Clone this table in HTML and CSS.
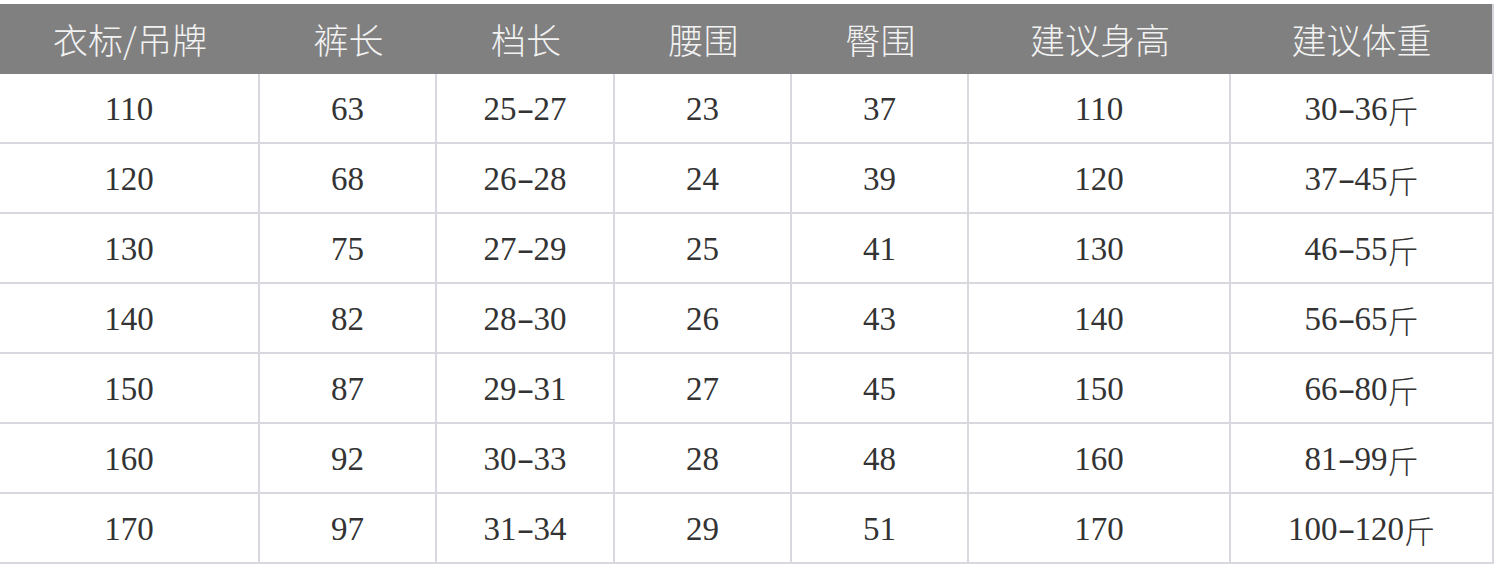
FILE: index.html
```html
<!DOCTYPE html>
<html lang="zh">
<head>
<meta charset="utf-8">
<title>尺码表</title>
<link rel="stylesheet" href="styles.css">
</head>
<body>
<div class="sheet">
  <div class="grid">
    <div class="hd">衣标/吊牌</div>
    <div class="hd">裤长</div>
    <div class="hd">档长</div>
    <div class="hd">腰围</div>
    <div class="hd">臀围</div>
    <div class="hd">建议身高</div>
    <div class="hd">建议体重</div>

    <div class="c">110</div><div class="c">63</div><div class="c">25<span class="d">-</span>27</div><div class="c">23</div><div class="c">37</div><div class="c">110</div><div class="c">30<span class="d">-</span>36<span class="cjk">斤</span></div>
    <div class="c">120</div><div class="c">68</div><div class="c">26<span class="d">-</span>28</div><div class="c">24</div><div class="c">39</div><div class="c">120</div><div class="c">37<span class="d">-</span>45<span class="cjk">斤</span></div>
    <div class="c">130</div><div class="c">75</div><div class="c">27<span class="d">-</span>29</div><div class="c">25</div><div class="c">41</div><div class="c">130</div><div class="c">46<span class="d">-</span>55<span class="cjk">斤</span></div>
    <div class="c">140</div><div class="c">82</div><div class="c">28<span class="d">-</span>30</div><div class="c">26</div><div class="c">43</div><div class="c">140</div><div class="c">56<span class="d">-</span>65<span class="cjk">斤</span></div>
    <div class="c">150</div><div class="c">87</div><div class="c">29<span class="d">-</span>31</div><div class="c">27</div><div class="c">45</div><div class="c">150</div><div class="c">66<span class="d">-</span>80<span class="cjk">斤</span></div>
    <div class="c">160</div><div class="c">92</div><div class="c">30<span class="d">-</span>33</div><div class="c">28</div><div class="c">48</div><div class="c">160</div><div class="c">81<span class="d">-</span>99<span class="cjk">斤</span></div>
    <div class="c">170</div><div class="c">97</div><div class="c">31<span class="d">-</span>34</div><div class="c">29</div><div class="c">51</div><div class="c">170</div><div class="c">100<span class="d">-</span>120<span class="cjk">斤</span></div>
  </div>
</div>
</body>
</html>
```

FILE: styles.css
```css
html, body {
  margin: 0;
  padding: 0;
  background: #ffffff;
}

.sheet {
  padding-top: 4px;
  width: 1500px;
  height: 578px;
  overflow: hidden;
}

.grid {
  display: grid;
  grid-template-columns: 260px 177px 178px 177px 177px 262px 263px;
  grid-auto-rows: 70px;
  width: 1494px;
}

.hd {
  background: #808080;
  color: #f2f2f2;
  font-family: "Noto Sans CJK SC", sans-serif;
  font-weight: 300;
  font-size: 35px;
  display: flex;
  align-items: center;
  justify-content: center;
  padding-bottom: 2px;
  box-sizing: border-box;
}

.grid .hd:nth-child(7) {
  border-right: 2px solid #d4d4dc;
}

.c {
  box-sizing: border-box;
  border-right: 2px solid #d8d8de;
  border-bottom: 2px solid #d8d8de;
  display: flex;
  align-items: center;
  justify-content: center;
  padding-top: 2px;
  font-family: "Liberation Serif", "Noto Sans CJK SC", serif;
  font-size: 33px;
  color: #333333;
}

.d {
  display: inline-block;
  transform: scaleX(1.6);
  margin: 0 3px;
}

.cjk {
  font-family: "Noto Sans CJK SC", sans-serif;
  font-weight: 300;
  font-size: 31px;
}
```
